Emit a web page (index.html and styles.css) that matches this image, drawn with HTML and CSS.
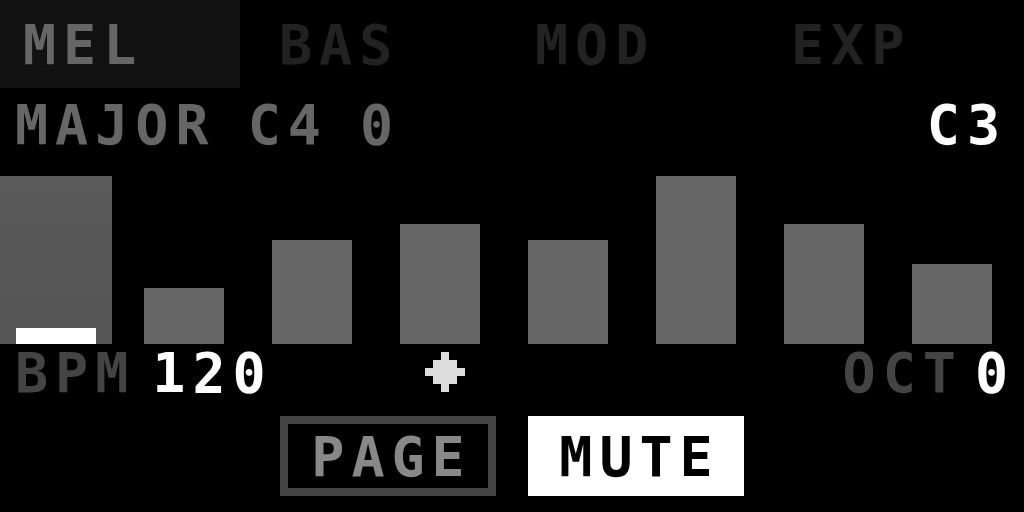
FILE: index.html
```html
<!DOCTYPE html>
<html>
<head>
<meta charset="utf-8">
<link rel="stylesheet" href="styles.css">
</head>
<body>
<div class="screen">
  <div class="tabs">
    <div class="tab active"><span class="txt">MEL</span></div>
    <div class="tab"><span class="txt">BAS</span></div>
    <div class="tab"><span class="txt">MOD</span></div>
    <div class="tab"><span class="txt">EXP</span></div>
  </div>
  <div class="info">
    <span class="txt dim scale">MAJOR C4 0</span>
    <span class="txt white">C3</span>
  </div>
  <div class="bars">
    <div class="bar selected" style="height:168px"><div class="cursor"></div></div>
    <div class="bar" style="height:56px"></div>
    <div class="bar" style="height:104px"></div>
    <div class="bar" style="height:120px"></div>
    <div class="bar" style="height:104px"></div>
    <div class="bar" style="height:168px"></div>
    <div class="bar" style="height:120px"></div>
    <div class="bar" style="height:80px"></div>
  </div>
  <div class="status">
    <div class="group bpm">
      <span class="txt darker">BPM</span>
      <span class="txt white">120</span>
    </div>
    <svg class="beat" width="40" height="40" viewBox="0 0 5 5" shape-rendering="crispEdges">
      <path d="M2 0h1v1h1v1h1v1h-1v1h-1v1h-1v-1h-1v-1h-1v-1h1v-1h1z" fill="#dddddd"/>
    </svg>
    <div class="spacer"></div>
    <div class="group oct">
      <span class="txt darker">OCT</span>
      <span class="txt white">0</span>
    </div>
  </div>
  <div class="buttons">
    <div class="btn page"><span class="txt">PAGE</span></div>
    <div class="btn mute"><span class="txt">MUTE</span></div>
  </div>
</div>
</body>
</html>
```

FILE: styles.css
```css
html, body {
  margin: 0;
  padding: 0;
  background: #000;
}
.screen {
  width: 1024px;
  height: 512px;
  background: #000;
  overflow: hidden;
  display: flex;
  flex-direction: column;
}
.txt {
  font-family: "DejaVu Sans Mono", "Liberation Mono", monospace;
  font-weight: bold;
  font-size: 55px;
  line-height: 40px;
  height: 40px;
  letter-spacing: 7px;
  white-space: pre;
  display: block;
}
.tabs {
  display: grid;
  grid-template-columns: repeat(4, 256px);
  height: 88px;
}
.tab {
  width: 240px;
  padding: 25px 0 0 23px;
  box-sizing: border-box;
  color: #222;
}
.tab.active {
  background: #111;
  color: #666;
}
.info {
  display: flex;
  justify-content: space-between;
  box-sizing: border-box;
  height: 56px;
  padding: 17px 17px 0 15px;
}
.scale { word-spacing: -8px; }
.dim { color: #666; }
.darker { color: #444; }
.white { color: #fff; }
.bars {
  height: 200px;
  display: flex;
  align-items: flex-end;
  gap: 48px;
  padding-left: 16px;
}
.bar {
  width: 80px;
  background: #666;
  flex: none;
}
.bar.selected {
  width: 112px;
  margin: 0 -16px;
  background: linear-gradient(#5a5a5a, #555);
  display: flex;
  flex-direction: column;
  justify-content: flex-end;
}
.cursor {
  height: 16px;
  margin: 0 16px;
  background: #fff;
}
.status {
  display: flex;
  align-items: flex-start;
  box-sizing: border-box;
  height: 48px;
  padding: 8px 9px 0 15px;
}
.group {
  display: flex;
  padding-top: 1px;
}
.bpm { gap: 17px; }
.oct { gap: 12px; }
.beat {
  margin-left: 152px;
  display: block;
}
.spacer { flex: 1; }
.buttons {
  display: flex;
  justify-content: center;
  gap: 32px;
  margin-top: 24px;
}
.btn {
  width: 216px;
  height: 80px;
  box-sizing: border-box;
  display: flex;
  align-items: center;
  justify-content: center;
}
.btn .txt {
  margin-right: -7px;
  padding-top: 1px;
}
.page {
  border: 8px solid #444;
  color: #888;
}
.mute {
  background: #fff;
  color: #000;
}
```
